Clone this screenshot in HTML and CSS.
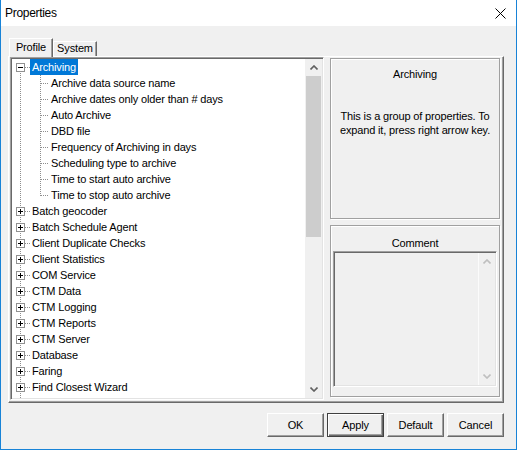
FILE: index.html
```html
<!DOCTYPE html>
<html>
<head>
<meta charset="utf-8">
<title>Properties</title>
<link rel="stylesheet" href="styles.css">
</head>
<body>
<div class="window">
  <div class="titlebar">
    <span class="title">Properties</span>
    <span class="close"><svg width="11" height="11" viewBox="0 0 11 11"><path d="M0.5 0.5 L10.5 10.5 M10.5 0.5 L0.5 10.5" stroke="#000" stroke-width="1" fill="none"/></svg></span>
  </div>
  <div class="client">
    <div class="tabs">
      <div class="tab active">Profile</div>
      <div class="tab">System</div>
    </div>
    <div class="panel">
      <div class="tree">
        <div class="tree-list">
          <div class="node root first"><span class="exp minus"></span><span class="label sel">Archiving</span></div>
          <div class="node child"><span class="label">Archive data source name</span></div>
          <div class="node child"><span class="label">Archive dates only older than # days</span></div>
          <div class="node child"><span class="label">Auto Archive</span></div>
          <div class="node child"><span class="label">DBD file</span></div>
          <div class="node child"><span class="label">Frequency of Archiving in days</span></div>
          <div class="node child"><span class="label">Scheduling type to archive</span></div>
          <div class="node child"><span class="label">Time to start auto archive</span></div>
          <div class="node child last"><span class="label">Time to stop auto archive</span></div>
          <div class="node root"><span class="exp plus"></span><span class="label">Batch geocoder</span></div>
          <div class="node root"><span class="exp plus"></span><span class="label">Batch Schedule Agent</span></div>
          <div class="node root"><span class="exp plus"></span><span class="label">Client Duplicate Checks</span></div>
          <div class="node root"><span class="exp plus"></span><span class="label">Client Statistics</span></div>
          <div class="node root"><span class="exp plus"></span><span class="label">COM Service</span></div>
          <div class="node root"><span class="exp plus"></span><span class="label">CTM Data</span></div>
          <div class="node root"><span class="exp plus"></span><span class="label">CTM Logging</span></div>
          <div class="node root"><span class="exp plus"></span><span class="label">CTM Reports</span></div>
          <div class="node root"><span class="exp plus"></span><span class="label">CTM Server</span></div>
          <div class="node root"><span class="exp plus"></span><span class="label">Database</span></div>
          <div class="node root"><span class="exp plus"></span><span class="label">Faring</span></div>
          <div class="node root"><span class="exp plus"></span><span class="label">Find Closest Wizard</span></div>
          <div class="node root"></div>
        </div>
        <div class="vscroll">
          <div class="sbtn"><svg width="8" height="5" viewBox="0 0 8 5"><polyline points="0.5,4.5 4,1 7.5,4.5" fill="none" stroke="#606060" stroke-width="1.6"/></svg></div>
          <div class="track"><div class="thumb"></div></div>
          <div class="sbtn"><svg width="8" height="5" viewBox="0 0 8 5"><polyline points="0.5,0.5 4,4 7.5,0.5" fill="none" stroke="#606060" stroke-width="1.6"/></svg></div>
        </div>
      </div>
      <div class="side">
        <div class="desc">
          <div class="desc-title">Archiving</div>
          <div class="desc-text">This is a group of properties. To expand it, press right arrow key.</div>
        </div>
        <div class="comment">
          <div class="comment-label">Comment</div>
          <div class="comment-box">
            <div class="comment-text"></div>
            <div class="vscroll disabled">
              <div class="sbtn"><svg width="8" height="5" viewBox="0 0 8 5"><polyline points="0.5,4.5 4,1 7.5,4.5" fill="none" stroke="#bfbfbf" stroke-width="1.6"/></svg></div>
              <div class="track"></div>
              <div class="sbtn"><svg width="8" height="5" viewBox="0 0 8 5"><polyline points="0.5,0.5 4,4 7.5,0.5" fill="none" stroke="#bfbfbf" stroke-width="1.6"/></svg></div>
            </div>
          </div>
        </div>
      </div>
    </div>
    <div class="buttons">
      <button class="btn">OK</button>
      <button class="btn default">Apply</button>
      <button class="btn">Default</button>
      <button class="btn">Cancel</button>
    </div>
  </div>
</div>
</body>
</html>
```

FILE: styles.css
```css
* { box-sizing: border-box; }
html, body { margin: 0; padding: 0; }
body {
  width: 517px;
  height: 450px;
  overflow: hidden;
  background: #fff;
  font-family: "Liberation Sans", Arial, sans-serif;
  font-size: 11px;
  letter-spacing: -0.15px;
  color: #000;
  --dv: repeating-linear-gradient(to bottom, #8e8e8e 0 1px, transparent 1px 2px);
  --dh: repeating-linear-gradient(to right, #8e8e8e 0 1px, transparent 1px 2px);
}
.window {
  width: 517px;
  height: 450px;
  border: 1px solid #1883d7;
  border-top: none;
  display: flex;
  flex-direction: column;
}
.titlebar {
  height: 26px;
  flex: none;
  background: #fff;
  display: flex;
  align-items: center;
  padding-left: 4px;
}
.title {
  flex: 1;
  font-size: 12px;
  letter-spacing: -0.3px;
}
.close {
  display: flex;
  width: 11px;
  height: 11px;
  margin-right: 10px;
}
.client {
  flex: 1;
  background: #f0f0f0;
  padding: 12px 12px 12px 7px;
  display: flex;
  flex-direction: column;
}
.tabs {
  height: 18px;
  flex: none;
  display: flex;
  align-items: flex-end;
  padding-left: 1px;
}
.tab {
  width: 44px;
  height: 15px;
  text-align: center;
  line-height: 13px;
  border-top: 1px solid #fff;
  border-left: 1px solid #fff;
  border-right: 1px solid #696969;
  box-shadow: inset -1px 0 0 #a0a0a0;
  background: #f0f0f0;
}
.tab.active {
  height: 19px;
  margin-bottom: -1px;
  position: relative;
  z-index: 1;
  line-height: 16px;
}
.panel {
  height: 347px;
  flex: none;
  border: 1px solid;
  border-color: #fff #696969 #696969 #fff;
  box-shadow: inset -1px -1px 0 #a0a0a0;
  padding: 0 3px 2px 1px;
  display: flex;
  gap: 6px;
}
.tree {
  width: 314px;
  height: 343px;
  border: 1px solid;
  border-color: #a0a0a0 #fff #fff #a0a0a0;
  box-shadow: inset 1px 1px 0 #696969, inset -1px -1px 0 #e3e3e3;
  padding: 1px;
  display: flex;
}
.tree-list {
  flex: 1;
  background: #fff;
  overflow: hidden;
}
.node {
  height: 16px;
  display: flex;
  white-space: nowrap;
  background-repeat: no-repeat;
}
.root {
  padding-left: 4px;
  background-image: var(--dv), var(--dh);
  background-size: 1px 100%, 5px 1px;
  background-position: 8px 0, 13px 8px;
}
.root.first {
  background-size: 1px 8px, 5px 1px;
  background-position: 8px 8px, 13px 8px;
}
.child {
  padding-left: 37px;
  background-image: var(--dv), var(--dv), var(--dh);
  background-size: 1px 100%, 1px 100%, 8px 1px;
  background-position: 8px 0, 28px 0, 29px 8px;
}
.child.last {
  background-size: 1px 100%, 1px 9px, 8px 1px;
}
.exp {
  width: 9px;
  height: 9px;
  margin-top: 4px;
  margin-right: 5px;
  border: 1px solid #919191;
  background-color: #fff;
  background-repeat: no-repeat;
  flex: none;
}
.exp.minus {
  background-image: linear-gradient(#000, #000);
  background-size: 5px 1px;
  background-position: 1px 3px;
}
.exp.plus {
  background-image: linear-gradient(#000, #000), linear-gradient(#000, #000);
  background-size: 5px 1px, 1px 5px;
  background-position: 1px 3px, 3px 1px;
}
.label {
  height: 16px;
  line-height: 16px;
  padding: 0 2px;
}
.label.sel {
  background: #0078d7;
  color: #fff;
}
.vscroll {
  width: 17px;
  flex: none;
  display: flex;
  flex-direction: column;
  background: #f0f0f0;
}
.sbtn {
  height: 17px;
  flex: none;
  display: flex;
  align-items: center;
  justify-content: center;
}
.track {
  flex: 1;
  padding: 0 1px;
}
.thumb {
  height: 161px;
  background: #cdcdcd;
}
.vscroll.disabled {
  box-shadow: inset 1px 0 0 #fbfbfb;
}
.side {
  width: 170px;
  margin-top: 1px;
  display: flex;
  flex-direction: column;
  gap: 6px;
}
.desc, .comment {
  border: 1px solid #a0a0a0;
  box-shadow: 1px 1px 0 #fff, inset 1px 1px 0 #fff;
}
.desc {
  height: 161px;
  padding: 9px 6px 0;
  text-align: center;
}
.desc-title {
  line-height: 13px;
}
.desc-text {
  margin-top: 28px;
  line-height: 14px;
}
.comment {
  height: 172px;
  padding: 11px 2px 0;
}
.comment-label {
  text-align: center;
  line-height: 13px;
  margin-bottom: 1px;
}
.comment-box {
  height: 136px;
  border: 1px solid;
  border-color: #a0a0a0 #fff #fff #a0a0a0;
  box-shadow: inset 1px 1px 0 #696969, inset -1px -1px 0 #e3e3e3;
  padding: 1px;
  display: flex;
  background: #f0f0f0;
}
.comment-text {
  flex: 1;
}
.buttons {
  margin-top: 10px;
  display: flex;
  justify-content: flex-end;
  gap: 3px;
}
.btn {
  width: 57px;
  height: 24px;
  margin: 0;
  padding: 0;
  font-family: "Liberation Sans", Arial, sans-serif;
  font-size: 11px;
  letter-spacing: -0.15px;
  color: #000;
  background: #f0f0f0;
  border: 1px solid;
  border-color: #fff #696969 #696969 #fff;
  box-shadow: inset -1px -1px 0 #a0a0a0;
  border-radius: 0;
}
.btn.default {
  border: 1px solid #404040;
  box-shadow: inset 1px 1px 0 #fff, inset -1px -1px 0 #696969, inset -2px -2px 0 #a0a0a0;
}
```
